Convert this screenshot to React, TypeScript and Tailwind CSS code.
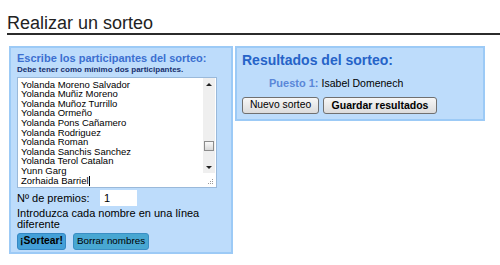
const names = [
  "Yolanda Moreno Molina",
  "Yolanda Moreno Salvador",
  "Yolanda Muñiz Moreno",
  "Yolanda Muñoz Turrillo",
  "Yolanda Ormeño",
  "Yolanda Pons Cañamero",
  "Yolanda Rodriguez",
  "Yolanda Roman",
  "Yolanda Sanchis Sanchez",
  "Yolanda Terol Catalan",
  "Yunn Garg",
  "Zorhaida Barriel",
];

const sans = { fontFamily: '"Liberation Sans", Arial, sans-serif' };

// Barra de desplazamiento dibujada a mano
function FakeScrollbar() {
  return (
    <div className="absolute right-[1px] top-0 bottom-0 w-[12px] flex flex-col">
      <div className="h-[95px] flex flex-col bg-[#efefef]">
        <div className="h-[12px] flex items-center justify-center">
          <div className="w-0 h-0 border-l-[3px] border-r-[3px] border-b-[3px] border-l-transparent border-r-transparent border-b-[#222]" />
        </div>
        <div className="flex-1 relative">
          <div className="absolute left-[1px] right-[1px] bottom-[10px] h-[10px] border border-[#8c8c8c] bg-gradient-to-b from-[#fafafa] to-[#d9d9d9]" />
        </div>
        <div className="h-[12px] flex items-center justify-center">
          <div className="w-0 h-0 border-l-[3px] border-r-[3px] border-t-[3px] border-l-transparent border-r-transparent border-t-[#222]" />
        </div>
      </div>
      <div className="flex-1 flex flex-col items-end justify-end pr-[2px] pb-[3px] gap-[1px]">
        <div className="flex gap-[1px]"><span className="w-px h-px bg-[#999]" /></div>
        <div className="flex gap-[1px]"><span className="w-px h-px bg-[#999]" /><span className="w-px h-px bg-[#999]" /></div>
        <div className="flex gap-[1px]"><span className="w-px h-px bg-[#999]" /><span className="w-px h-px bg-[#999]" /><span className="w-px h-px bg-[#999]" /></div>
      </div>
    </div>
  );
}

export default function App() {
  return (
    <div className="w-[500px] h-[265px] bg-white overflow-hidden" style={sans}>
      <div className="pl-[7px] pt-[13px]">
        <h1 className="text-[18px] leading-[20px] text-[#222] border-b-2 border-[#2b2b2b]">
          Realizar un sorteo
        </h1>
      </div>

      <div className="flex gap-[2px] pl-[9px] mt-[11px]">
        {/* Panel de participantes */}
        <div className="w-[224px] h-[208px] shrink-0 bg-[#bddcfb] border-2 border-[#9ccaf6] pl-[6px] pt-[3px]">
          <h2 className="text-[11px] leading-[14px] font-bold text-[#3b6fd0] whitespace-nowrap">
            Escribe los participantes del sorteo:
          </h2>
          <p className="text-[8px] leading-[10px] font-bold text-[#17306e] whitespace-nowrap">
            Debe tener como mínimo dos participantes.
          </p>
          <div className="relative w-[200px] h-[111px] bg-white border border-[#9ab9da] mt-[2px] overflow-hidden">
            <div className="pl-[3px] -mt-[8px] text-[9.5px] leading-[9.6px] text-black">
              {names.map((n, i) => (
                <div key={i} className="h-[9.6px] whitespace-nowrap">
                  {n}
                  {i === names.length - 1 && (
                    <span className="inline-block w-px h-[10px] bg-black align-[-2px]" />
                  )}
                </div>
              ))}
            </div>
            <FakeScrollbar />
          </div>
          <div className="flex items-center mt-[2px] text-[11px] text-black">
            <span className="w-[83px]">Nº de premios:</span>
            <div className="w-[37px] h-[16px] bg-white pl-[4px] leading-[16px]">1</div>
          </div>
          <p className="text-[11px] leading-[11px] text-black mt-[1px] pr-[4px]">
            Introduzca cada nombre en una línea diferente
          </p>
          <div className="flex gap-[7px] mt-[3px]">
            <button className="w-[49px] h-[17px] rounded-[3px] bg-[#44a0d8] border border-[#3487c4] text-[10.3px] leading-none font-bold text-black">
              ¡Sortear!
            </button>
            <button className="w-[76px] h-[17px] rounded-[3px] bg-[#48a7d2] border border-[#3a8ec4] text-[9.8px] leading-none text-black">
              Borrar nombres
            </button>
          </div>
        </div>

        {/* Panel de resultados */}
        <div className="w-[250px] h-[75px] shrink-0 bg-[#bddcfb] border-2 border-[#9ccaf6] pl-[5px] pt-[4px]">
          <h2 className="text-[14px] leading-[17px] font-bold text-[#2563c8]">Resultados del sorteo:</h2>
          <div className="pl-[27px] mt-[8px] text-[11px] leading-[13px]">
            <span className="font-bold text-[#5a87d8]">Puesto 1:</span>{" "}
            <span className="text-black text-[10.5px]">Isabel Domenech</span>
          </div>
          <div className="flex gap-[4px] mt-[7px]">
            <button className="w-[77px] h-[17px] rounded-[3px] border border-[#707070] bg-gradient-to-b from-[#f7f7f7] to-[#dcdcdc] text-[10.3px] leading-none text-black">
              Nuevo sorteo
            </button>
            <button className="w-[114px] h-[17px] rounded-[3px] border border-[#707070] bg-gradient-to-b from-[#f7f7f7] to-[#dcdcdc] text-[10.5px] leading-none font-bold text-black">
              Guardar resultados
            </button>
          </div>
        </div>
      </div>
    </div>
  );
}
